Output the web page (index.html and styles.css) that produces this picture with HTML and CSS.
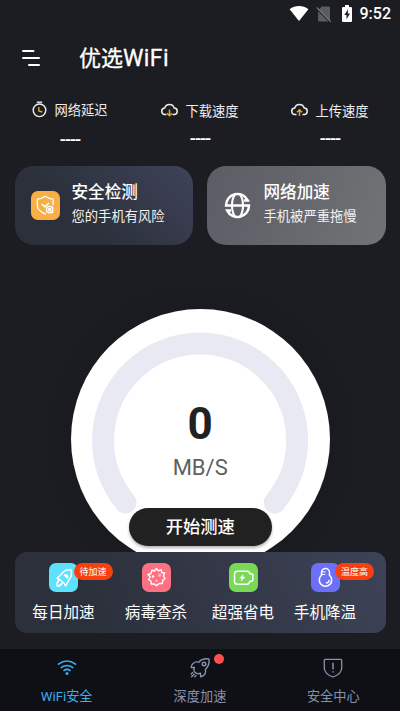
FILE: index.html
```html
<!DOCTYPE html>
<html lang="zh-CN">
<head>
<meta charset="utf-8">
<title>优选WiFi</title>
<link rel="stylesheet" href="styles.css">
</head>
<body>
<div class="status">
  <svg class="st-wifi" width="20" height="17" viewBox="0 0 20 17"><path d="M.6 4.2C6 0 14 0 19.4 4.2L10 16z" fill="#fff"/></svg>
  <svg class="st-sim" width="16" height="18" viewBox="0 0 16 18"><path d="M5.5 1.5H13q1 0 1 1V16L3 5z M2.2 6.2 12.5 16.5H3q-1 0-1-1z" fill="#5b5c60"/><path d="M.8 2.5 14.8 16.8" stroke="#77787b" stroke-width="1.2"/></svg>
  <svg class="st-bat" width="10" height="17" viewBox="0 0 10 17"><path d="M3 0h4v2h2q1 0 1 1v13q0 1-1 1H1q-1 0-1-1V3q0-1 1-1h2z" fill="#fff"/><path d="M6 4.3 2.3 10H4.5v4.3L8 8.6H5.8z" fill="#1c1d22"/></svg>
  <span class="clock">9:52</span>
</div>
<header class="top">
  <svg width="18" height="18" viewBox="0 0 18 18" fill="none" stroke="#fff" stroke-width="2" stroke-linecap="round"><path d="M1 2h10.5M1 9h16M7 16h10"/></svg>
  <h1>优选<span class="latin">WiFi</span></h1>
</header>
<section class="stats">
  <div class="stat delay">
    <div class="label">
      <svg width="15" height="17" viewBox="0 0 15 17" fill="none" stroke="#eee" stroke-width="1.4"><path d="M4.8 1.2h5.4"/><circle cx="7.5" cy="9.3" r="6.3"/><path d="M6.8 6v4l3.5 1" stroke="#e6a817"/></svg>
      <span>网络延迟</span>
    </div>
    <div class="value">----</div>
  </div>
  <div class="stat">
    <div class="label">
      <svg width="17" height="14" viewBox="0 0 17 14" fill="none" stroke="#eee" stroke-width="1.5"><path d="M5.5 11.5H4.2A3.2 3.2 0 0 1 3.7 5.1 4.9 4.9 0 0 1 13.2 5.1 3.2 3.2 0 0 1 12.8 11.5h-1.3"/><path d="M8.5 6.5v6M6 10.2l2.5 2.5 2.5-2.5" stroke="#e6a817"/></svg>
      <span>下载速度</span>
    </div>
    <div class="value">----</div>
  </div>
  <div class="stat">
    <div class="label">
      <svg width="17" height="14" viewBox="0 0 17 14" fill="none" stroke="#eee" stroke-width="1.5"><path d="M5.5 11.5H4.2A3.2 3.2 0 0 1 3.7 5.1 4.9 4.9 0 0 1 13.2 5.1 3.2 3.2 0 0 1 12.8 11.5h-1.3"/><path d="M8.5 13V7M6 9.3l2.5-2.5L11 9.3" stroke="#e6a817"/></svg>
      <span>上传速度</span>
    </div>
    <div class="value">----</div>
  </div>
</section>
<section class="cards">
  <div class="card safe">
    <div class="tile orange">
      <svg width="29" height="29" viewBox="0 0 29 29" fill="none" stroke="#fff" stroke-width="1.3" stroke-linejoin="round"><path d="M15 22.4 14 22.8Q6.3 19.5 6.3 14.5V8.2Q10.5 8 14.2 5.3 18 8 22 8.2V14"/><path d="m10.8 13 3 2.8 4.2-3.8" stroke-width="1.6"/><circle cx="18.5" cy="18.5" r="3.1"/><circle cx="18.5" cy="18.5" r="1"/><path d="M21.6 15.5v6.2H17"/></svg>
    </div>
    <div class="copy"><h2>安全检测</h2><p>您的手机有风险</p></div>
  </div>
  <div class="card boost">
    <svg class="globe" width="27" height="27" viewBox="0 0 27 27" fill="none" stroke="#fff" stroke-width="2.5"><path d="M20 8.6H23.9A11.5 11.5 0 0 0 2 13.5H25A11.5 11.5 0 0 1 3.1 18.4H7"/><path d="M11 2.4C7 8 7 19 11 24.6M16 2.4C20 8 20 19 16 24.6" stroke-width="2.1"/></svg>
    <div class="copy"><h2>网络加速</h2><p>手机被严重拖慢</p></div>
  </div>
</section>
<section class="gauge">
  <div class="dial">
    <svg class="arc" width="260" height="260" viewBox="0 0 260 260"><path d="M54.5 193.5A97 97 0 1 1 203.7 193.5" fill="none" stroke="#e9e9f3" stroke-width="22" stroke-linecap="round"/></svg>
    <div class="num">0</div>
    <div class="unit">MB/S</div>
  </div>
  <button class="start">开始测速</button>
</section>
<section class="tools">
  <div class="tool">
    <div class="tile cyan">
      <svg width="29" height="29" viewBox="0 0 29 29" fill="none" stroke="#fff" stroke-width="1.5" stroke-linejoin="round" stroke-linecap="round"><path d="M22 7Q16 6 12.4 11.2L8 15.2 10.7 16.5 15.3 20.5 16.6 23 19.8 17.3Q23.5 13 22 7z"/><path d="M10 17.5Q7.5 19 8 23 11.5 23 13 20.5"/><path d="M14.5 12.3q2-2.4 4.2-.2 1.7 2.1-.3 4" fill="#fff" stroke="none"/></svg>
    </div>
    <span class="badge">待加速</span>
    <div class="name">每日加速</div>
  </div>
  <div class="tool">
    <div class="tile pink">
      <svg width="29" height="29" viewBox="0 0 29 29" fill="none" stroke="#fff" stroke-width="1.4" stroke-linejoin="round"><path d="M10 7.2 12.5 8 14.4 5.5 16.2 7.8 19.3 6.7 19.7 9.5 22.7 10 21.5 13 23 15.5 20.9 17.2 20.3 20.5 17.2 20.5 14.5 22.8 12.4 20.9 9.2 21 9 18 6.6 16.7 8.2 14 6 11.5 9 10.5z"/><circle cx="11" cy="13.5" r=".6"/><circle cx="17.7" cy="12.3" r="1.8" fill="#ffadb9" stroke="none"/><path d="M14.5 16.3v3M13 17.8h3" stroke="#ffb5bf" stroke-width="1"/></svg>
    </div>
    <div class="name">病毒查杀</div>
  </div>
  <div class="tool">
    <div class="tile green">
      <svg width="29" height="29" viewBox="0 0 29 29" fill="none" stroke="#fff" stroke-width="1.5" stroke-linejoin="round"><path d="M8.2 8.2H18.2Q20.4 8.2 20.8 10.8H22.5Q23.8 10.8 23.8 12V17Q23.8 18.2 22.5 18.2H20.8Q20.4 21.3 18.2 21.3H8.2Q5.5 21.3 5.5 18.5V11Q5.5 8.2 8.2 8.2z"/><path d="M14.6 10.7 10.2 15.6H12.9L11.6 19 16.5 13.8H13.6z" fill="#fff" stroke="none"/></svg>
    </div>
    <div class="name">超强省电</div>
  </div>
  <div class="tool">
    <div class="tile violet">
      <svg width="29" height="29" viewBox="0 0 29 29" fill="none" stroke="#fff" stroke-width="1.5" stroke-linecap="round"><path d="M10.5 12.3V9.5a4 4 0 0 1 8 0V12.3a6.2 6.2 0 1 1-8 0z"/><path d="M11 8.8h3M11 11.4h3" stroke-width="1"/><path d="M18 17.5Q17.8 19.7 15.5 20"/></svg>
    </div>
    <span class="badge">温度高</span>
    <div class="name">手机降温</div>
  </div>
</section>
<nav class="tabs">
  <div class="tab active">
    <svg width="20" height="20" viewBox="0 0 20 20" fill="none" stroke="currentColor" stroke-width="1.6" stroke-linecap="round"><path d="M1.5 6.2Q10 -.2 18.5 6.2M4.2 9.6Q10 5.3 15.8 9.6M7 12.5Q10 10.3 13 12.5"/><circle cx="10" cy="15.4" r="1.5" fill="currentColor" stroke="none"/></svg>
    <span>WiFi安全</span>
  </div>
  <div class="tab">
    <svg width="20" height="20" viewBox="0 0 20 20" fill="none" stroke="currentColor" stroke-width="1.4" stroke-linejoin="round" stroke-linecap="round"><path d="M18.9 1Q12.5-.2 8.8 4.2 5.5 3.2 3.3 5.2 1.2 7 1.2 9.6L4.4 9.4Q3.2 11.8 4.8 14.2 7.5 16.5 10.6 15.2L10.6 18.8Q13.5 18.4 14.9 16.2 16 14 15.3 11.4 19.9 7.3 18.9 1z"/><circle cx="14" cy="6" r="1.8"/><path d="M2.6 14.6 1.3 16M4.2 16.2 1.6 18.8M6 17.6 4.8 18.8"/></svg>
    <i class="dot"></i>
    <span>深度加速</span>
  </div>
  <div class="tab">
    <svg width="20" height="20" viewBox="0 0 20 20" fill="none" stroke="currentColor" stroke-width="1.3" stroke-linecap="round"><path d="M2.2 1.3H17.8Q18.7 1.3 18.7 2.2V10.5Q18.2 16 10 19 1.8 16 1.3 10.5V2.2Q1.3 1.3 2.2 1.3z"/><path d="M10 5.3v5.5M10 13.8v.3" stroke-width="1.5"/></svg>
    <span>安全中心</span>
  </div>
</nav>
</body>
</html>
```
FILE: styles.css
```css
* { box-sizing: border-box; }
body {
  margin: 0;
  width: 400px;
  height: 711px;
  overflow: hidden;
  background: #1c1d22;
  color: #fff;
  font-family: Roboto, "Noto Sans CJK SC", sans-serif;
}
svg { display: block; flex: none; }
h1, h2, p { margin: 0; font-weight: 400; }
.status {
  height: 28px;
  display: flex;
  align-items: center;
  justify-content: flex-end;
  padding-right: 9px;
}
.st-wifi { margin-top: -2px; }
.st-sim { margin-left: 7px; margin-top: -1px; }
.st-bat { margin-left: 10px; margin-top: -1px; }
.clock { margin-left: 8px; font-size: 16px; line-height: 28px; font-weight: 500; }
.top {
  height: 60px;
  display: flex;
  align-items: center;
  padding-left: 22px;
  gap: 39px;
}
.top h1 { font-size: 22px; line-height: 30px; padding-top: 1px; -webkit-text-stroke: .3px #fff; }
.latin { font-size: 23px; letter-spacing: .4px; }
.stats { display: grid; grid-template-columns: repeat(3, 130px); padding: 12px 5px 0; height: 78px; }
.label { display: flex; align-items: center; justify-content: center; gap: 7px; height: 21px; font-size: 13.3px; color: #eee; }
.label svg { margin-top: -1px; }
.label span { margin-top: -1px; }
.delay .label { margin-bottom: 1px; }
.delay .label span { margin-top: -2px; }
.delay .label svg { margin-top: -2px; }
.value { text-align: center; font-size: 18px; line-height: 36px; font-weight: 500; letter-spacing: -1px; }
.cards { display: flex; gap: 14px; padding: 0 14.5px; height: 79px; }
.card { flex: 1; display: flex; align-items: center; border-radius: 19px; padding-left: 16.5px; gap: 11.5px; }
.safe { background: linear-gradient(45deg, #2b303b 35%, #3f4359); }
.boost { background: linear-gradient(110deg, #5b5c65, #727375); padding-left: 17.5px; gap: 12.5px; }
.copy { height: 79px; padding-top: 14px; }
.copy h2 { font-size: 16.6px; line-height: 26px; font-weight: 500; }
.copy p { font-size: 13.3px; line-height: 22px; color: #f2f2f2; }
.tile { width: 29px; height: 29px; border-radius: 7px; }
.orange { background: #f8af45; }
.cyan { background: #5fe0fc; }
.pink { background: #fd7183; }
.green { background: #79d857; }
.violet { background: #6c70f8; }
.gauge { position: relative; height: 307px; padding-top: 64px; overflow: hidden; }
.dial {
  position: relative;
  width: 259px;
  height: 260px;
  margin-left: 70.7px;
  border-radius: 50%;
  background: #fff;
  text-align: center;
  padding-top: 89px;
  box-shadow: 0 0 30px rgba(0, 0, 0, .15);
}
.arc { position: absolute; inset: 0; }
.num { color: #212121; font-size: 44px; font-weight: 700; line-height: 52px; }
.unit { color: #5f5f5f; font-size: 22px; line-height: 35px; }
.start {
  position: absolute;
  left: 128.5px;
  top: 263px;
  width: 143.5px;
  height: 38px;
  padding: 1px 0 0;
  border: 0;
  border-radius: 19px;
  background: #212121;
  color: #fff;
  font: 500 17.3px/37px Roboto, "Noto Sans CJK SC", sans-serif;
  box-shadow: 0 2px 3px rgba(0, 0, 0, .3);
}
.tools {
  display: grid;
  grid-template-columns: 98px 87px 87px 77px;
  margin: 0 14.5px;
  height: 81px;
  border-radius: 12px;
  background: linear-gradient(65deg, #2c303b 20%, #3d4257);
  padding-top: 11px;
}
.tool { position: relative; display: flex; flex-direction: column; align-items: center; }
.name { font-size: 15.6px; line-height: 24px; margin-top: 9px; white-space: nowrap; }
.badge {
  position: absolute;
  left: calc(50% + 10px);
  top: 0;
  width: 39px;
  height: 17px;
  border-radius: 9px;
  background: #f8400f;
  font-size: 9px;
  line-height: 18px;
  text-align: center;
}
.tabs {
  display: grid;
  grid-template-columns: repeat(3, 1fr);
  height: 62px;
  margin-top: 16px;
  background: #0f1015;
  color: #8790ad;
}
.tab { position: relative; display: flex; flex-direction: column; align-items: center; padding-top: 9px; font-size: 13.2px; line-height: 20px; gap: 9px; }
.active { color: #38aef6; }
.dot { position: absolute; left: 81px; top: 5px; width: 10px; height: 10px; border-radius: 50%; background: #ff5050; }
```
